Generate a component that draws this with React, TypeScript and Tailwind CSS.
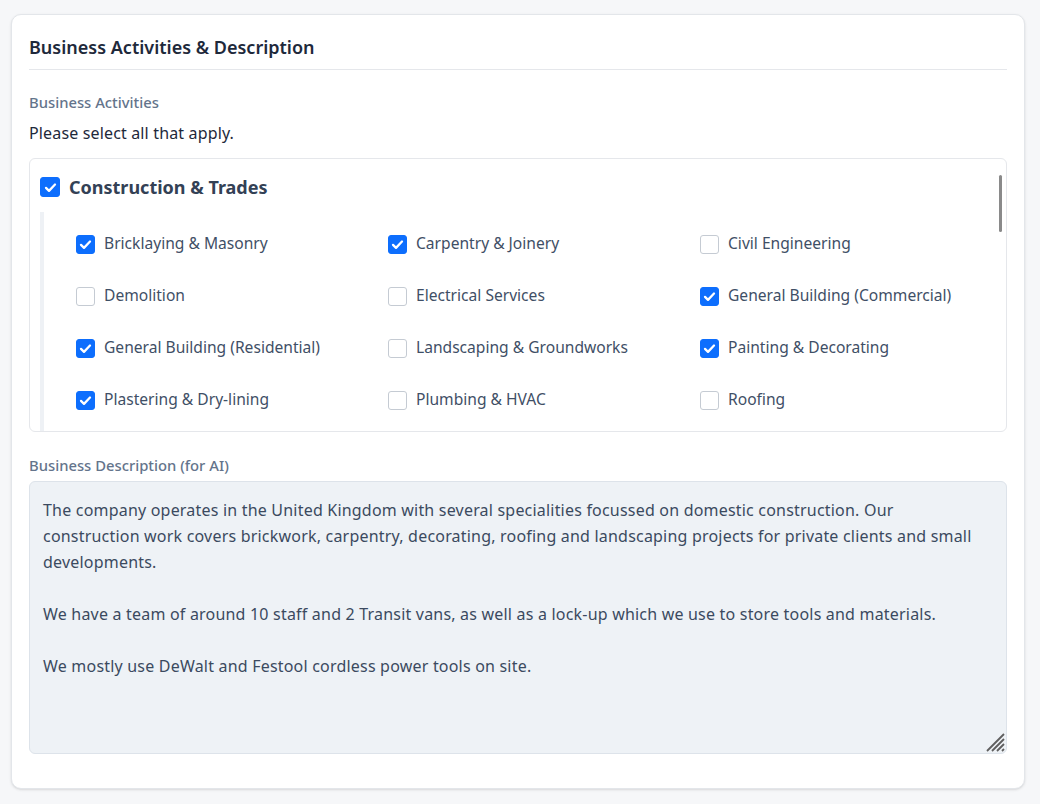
import { useState } from "react";

const activities = [
  { name: "Bricklaying & Masonry", checked: true },
  { name: "Carpentry & Joinery", checked: true },
  { name: "Civil Engineering", checked: false },
  { name: "Demolition", checked: false },
  { name: "Electrical Services", checked: false },
  { name: "General Building (Commercial)", checked: true },
  { name: "General Building (Residential)", checked: true },
  { name: "Landscaping & Groundworks", checked: false },
  { name: "Painting & Decorating", checked: true },
  { name: "Plastering & Dry-lining", checked: true },
  { name: "Plumbing & HVAC", checked: false },
  { name: "Roofing", checked: false },
];

const description = `The company operates in the United Kingdom with several specialities focussed on domestic construction. Our construction work covers brickwork, carpentry, decorating, roofing and landscaping projects for private clients and small developments.

We have a team of around 10 staff and 2 Transit vans, as well as a lock-up which we use to store tools and materials.

We mostly use DeWalt and Festool cordless power tools on site.`;

const Check = ({ checked, size }: { checked: boolean; size: "lg" | "sm" }) => (
  <span
    className={`flex items-center justify-center shrink-0 rounded-[3px] border ${
      size === "lg" ? "w-5 h-5" : "w-[19px] h-[19px]"
    } ${checked ? "bg-[#0d6efd] border-[#0d6efd]" : "bg-white border-[#c5cbd3]"}`}
  >
    {checked ? (
      <svg viewBox="0 0 20 20" className="w-[15px] h-[15px]" fill="none">
        <path
          d="M4 10.5l4 4 8-8.5"
          stroke="white"
          strokeWidth="3"
          strokeLinecap="round"
          strokeLinejoin="round"
        />
      </svg>
    ) : null}
  </span>
);

const App = () => {
  const [items, setItems] = useState(activities);
  const [text, setText] = useState(description);

  return (
    <div
      className="min-h-[804px] bg-[#f6f7f9] pt-[14px] pl-[11px]"
      style={{ fontFamily: '"Noto Sans", "Open Sans", sans-serif' }}
    >
      <div className="w-[1014px] h-[775px] bg-white border border-[#e3e6ea] rounded-[10px] shadow-sm px-[17px] pt-[18px]">
        {/* TITLE */}
        <div className="border-b border-[#e5e7eb] pb-[8px]">
          <h2 className="text-[18px] leading-[28px] font-semibold text-[#1e293b]">
            Business Activities & Description
          </h2>
        </div>
        {/* ACTIVITIES */}
        <p className="mt-[22px] text-[14.8px] leading-[20px] font-medium text-[#64748b]">
          Business Activities
        </p>
        <p className="mt-[9px] text-[16px] leading-[24px] text-[#1e293b] tracking-[0.15px]">
          Please select all that apply.
        </p>
        <div className="relative mt-[13px] h-[274px] border border-[#e5e7eb] rounded-[6px] overflow-hidden flex flex-col">
          <div className="flex items-center gap-[9px] pl-[10px] pt-[18px]">
            <Check checked size="lg" />
            <span className="text-[18px] leading-[20px] font-bold text-[#334155]">
              Construction & Trades
            </span>
          </div>
          <div className="flex-1 ml-[10px] mt-[15px] border-l-4 border-[#eef1f5] pl-[32px] pt-[6px]">
            <div className="grid grid-cols-[repeat(3,312px)]">
              {items.map((item, i) => (
                <label
                  key={item.name}
                  className="h-[52px] flex items-center gap-[9px] cursor-pointer"
                  onClick={() =>
                    setItems(
                      items.map((it, j) =>
                        j === i ? { ...it, checked: !it.checked } : it
                      )
                    )
                  }
                >
                  <Check checked={item.checked} size="sm" />
                  <span className="text-[15.6px] text-[#3f4f66]">{item.name}</span>
                </label>
              ))}
            </div>
          </div>
          {/* SCROLLBAR */}
          <div className="absolute right-[4px] top-[16px] w-[3px] h-[57px] rounded-full bg-[#8a8a8a]" />
        </div>
        {/* DESCRIPTION */}
        <p className="mt-[23px] text-[14.8px] leading-[20px] font-medium text-[#64748b]">
          Business Description (for AI)
        </p>
        <div className="relative mt-[6px]">
          <textarea
            value={text}
            onChange={(e) => setText(e.target.value)}
            className="block w-full h-[273px] bg-[#eef2f6] border border-[#dde3ea] rounded-[6px] px-[13px] pt-[15px] text-[16px] leading-[26px] tracking-[0.2px] text-[#3b4a5f] outline-none resize-none"
          />
          {/* RESIZE GRIP */}
          <svg
            viewBox="0 0 20 20"
            className="absolute right-[2px] bottom-[2px] w-[20px] h-[20px] pointer-events-none"
            fill="none"
            stroke="#5f5f5f"
            strokeWidth="1.8"
          >
            <path d="M19 2L2 19M19 7L7 19M19 12L12 19M19 17L17 19" />
          </svg>
        </div>
      </div>
    </div>
  );
};

export default App;
